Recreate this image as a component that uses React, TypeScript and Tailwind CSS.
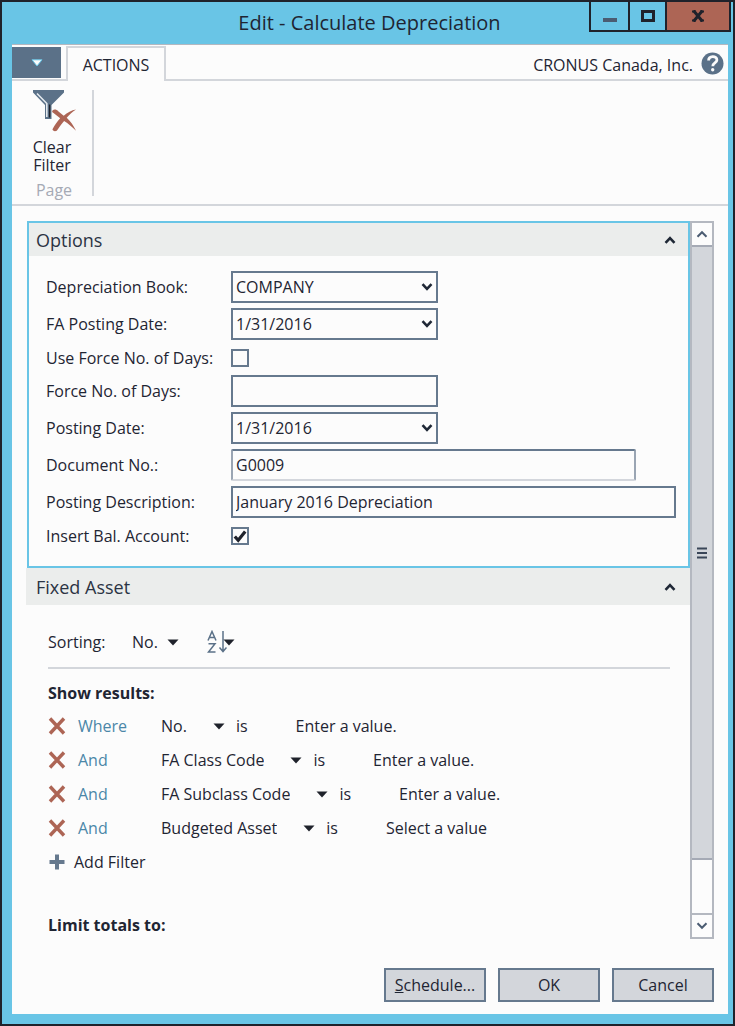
import type { ReactNode } from "react";

const INK = "text-[#1f2533]";

function Chevron({ up = false, thin = false }: { up?: boolean; thin?: boolean }) {
  return (
    <svg
      viewBox="0 0 12 8"
      className="h-2 w-3"
      fill="none"
      stroke={thin ? "#4b5c72" : "#1f2836"}
      strokeWidth={thin ? 2 : 2.6}
      aria-hidden="true"
    >
      <path d={up ? "M1.5 6.8 6 2.2l4.5 4.6" : "M1.5 1.2 6 5.8l4.5-4.6"} />
    </svg>
  );
}

function Caret() {
  return (
    <svg viewBox="0 0 12 7" className="h-[7px] w-3" fill="#1f222b" aria-hidden="true">
      <path d="M0.5 0.5h11L6 6.5z" />
    </svg>
  );
}

function ClearFilterIcon() {
  return (
    <svg viewBox="0 0 46 44" className="h-11 w-[46px]" aria-hidden="true">
      <path d="M1 0h31v2.5L19.5 15v14H13V15L1 2.500z" fill="#5b7188" />
      <path d="M5 3.500 14.800 13.500V27" fill="none" stroke="#e4e9ee" strokeWidth="1.6" />
      <path d="M17.600 14.500v13" stroke="#1f222b" strokeWidth="1.4" />
      <path
        d="M20.500 20.500c1.800-1.600 4-.9 6 .9l5.200 4.400c3.700-3.300 7.800-5.700 12.300-6.300-3.400 2.300-6.600 5-9.300 8.200 3.700 3.600 6.800 7.700 9.300 13-3.900-3.900-7.700-7.200-11.900-9.800-2.900 3.300-5.200 6.600-7.300 9.800-1.900 1.100-4.300.2-4.300-1.400 2.100-4.200 4.700-7.700 7.700-11l-6.700-5.200c-1.300-1-1.800-1.700-1-2.600z"
        fill="#ad6555"
      />
    </svg>
  );
}

function RemoveIcon() {
  return (
    <svg viewBox="0 0 18 18" className="size-[18px]" stroke="#ad6555" strokeWidth="3.4" aria-hidden="true">
      <path d="M2 1.500 16 16.500M16 1.500 2 16.500" />
    </svg>
  );
}

function SortIcon() {
  return (
    <svg
      viewBox="0 0 20 24"
      className="h-6 w-5"
      fill="none"
      stroke="#5b7188"
      strokeWidth="1.5"
      aria-hidden="true"
    >
      <path d="M1 10.500 5 1.500l4 9M2.400 7.500h5.200M1.500 13.800h6.500L1.500 22H8.500M16 1v20M12.500 17.500 16 21.500l3.500-4" />
    </svg>
  );
}

function SectionHeader({ title, className }: { title: string; className: string }) {
  return (
    <button
      type="button"
      aria-expanded="true"
      className={`flex w-full items-center justify-between bg-[#ebedec] text-left text-[18px] leading-6 text-[#2b3444] ${className}`}
    >
      <span>{title}</span>
      <Chevron up />
    </button>
  );
}

function Row({ id, label, short = false, children }: { id: string; label: string; short?: boolean; children: ReactNode }) {
  return (
    <div className={`flex items-center ${short ? "h-[25px]" : "h-8"}`}>
      <label htmlFor={id} className="w-[185px] shrink-0 whitespace-nowrap">
        {label}
      </label>
      {children}
    </div>
  );
}

const box = "h-8 border-2 border-[#66798e] bg-[#fcfcfc] px-[3px] outline-none";

function Dropdown({ id, value, others }: { id: string; value: string; others: string[] }) {
  return (
    <div className="relative w-[207px]">
      <select id={id} defaultValue={value} className={`${box} w-full appearance-none`}>
        {[value, ...others].map((o) => (
          <option key={o}>{o}</option>
        ))}
      </select>
      <span className="pointer-events-none absolute inset-y-0 right-[5px] flex items-center">
        <Chevron />
      </span>
    </div>
  );
}

function Check({ id, checked = false }: { id: string; checked?: boolean }) {
  return (
    <span className="relative flex size-[18px]">
      <input
        id={id}
        type="checkbox"
        defaultChecked={checked}
        className="peer size-[18px] appearance-none border-2 border-[#66798e] bg-[#fcfcfc]"
      />
      <svg
        viewBox="0 0 18 18"
        className="pointer-events-none absolute inset-0 hidden size-[18px] peer-checked:block"
        fill="none"
        stroke="#1f222b"
        strokeWidth="3.2"
        aria-hidden="true"
      >
        <path d="m3.800 9.500 3.400 3.800 7-8.800" />
      </svg>
    </span>
  );
}

function OptionsSection() {
  return (
    <section className="ml-px border-2 border-[#69c5e6] pb-[18px]">
      <SectionHeader title="Options" className="h-[33px] pr-3 pl-[7px]" />
      <div className="flex flex-col gap-[5px] pt-[15px] pr-3 pl-[17px]">
        <Row id="book" label="Depreciation Book:">
          <Dropdown id="book" value="COMPANY" others={["TAX"]} />
        </Row>
        <Row id="faDate" label="FA Posting Date:">
          <Dropdown id="faDate" value="1/31/2016" others={["2/29/2016"]} />
        </Row>
        <Row id="useForce" label="Use Force No. of Days:" short>
          <Check id="useForce" />
        </Row>
        <Row id="force" label="Force No. of Days:">
          <input id="force" type="text" className={`${box} w-[207px]`} />
        </Row>
        <Row id="postDate" label="Posting Date:">
          <Dropdown id="postDate" value="1/31/2016" others={["2/29/2016"]} />
        </Row>
        <Row id="docNo" label="Document No.:">
          <input
            id="docNo"
            type="text"
            defaultValue="G0009"
            className={`${box} mr-10 min-w-0 flex-1 rounded-xs border-x-[#9aa5b3] border-b-[#d3d6dc]`}
          />
        </Row>
        <Row id="desc" label="Posting Description:">
          <input id="desc" type="text" defaultValue="January 2016 Depreciation" className={`${box} min-w-0 flex-1`} />
        </Row>
        <Row id="bal" label="Insert Bal. Account:" short>
          <Check id="bal" checked />
        </Row>
      </div>
    </section>
  );
}

const filters = [
  { join: "Where", field: "No.", hint: "Enter a value." },
  { join: "And", field: "FA Class Code", hint: "Enter a value." },
  { join: "And", field: "FA Subclass Code", hint: "Enter a value." },
  { join: "And", field: "Budgeted Asset", hint: "Select a value" },
];

function InlineSelect({ value, label, gap }: { value: string; label: string; gap: string }) {
  return (
    <span className={`flex items-center ${gap}`}>
      <select aria-label={label} defaultValue={value} className="field-sizing-content appearance-none outline-none">
        {filters.map((f) => (
          <option key={f.field}>{f.field}</option>
        ))}
      </select>
      <Caret />
    </span>
  );
}

function FixedAssetSection() {
  return (
    <section>
      <SectionHeader title="Fixed Asset" className="h-[37px] pr-[14px] pl-[10px]" />
      <div className="pr-5 pl-[22px]">
        <div className="flex h-16 items-center border-b-2 border-[#d3d6db] pt-3">
          <span className="w-[84px]">Sorting:</span>
          <InlineSelect value="No." label="Sorting" gap="gap-[9px]" />
          <button type="button" aria-label="Sort order" className="ml-7 flex items-center">
            <SortIcon />
            <span className="-ml-1">
              <Caret />
            </span>
          </button>
        </div>
        <h3 className="pt-3 leading-6 font-bold">Show results:</h3>
        <ul className="pt-1">
          {filters.map((f) => (
            <li key={f.field} className="flex h-[34px] items-center whitespace-nowrap">
              <button type="button" aria-label={`Remove ${f.field}`}>
                <RemoveIcon />
              </button>
              <span className="ml-3 w-[83px] text-[#4b87a8]">{f.join}</span>
              <InlineSelect value={f.field} label={`${f.join} field`} gap="gap-[26px]" />
              <span className="ml-[11px]">is</span>
              <input
                type="text"
                aria-label={`${f.field} value`}
                placeholder={f.hint}
                className="ml-12 w-32 outline-none placeholder:text-[#1f2533] placeholder:opacity-100"
              />
            </li>
          ))}
        </ul>
        <button type="button" className="flex h-[34px] items-center gap-2">
          <svg viewBox="0 0 18 18" className="size-[18px]" stroke="#66798e" strokeWidth="4" aria-hidden="true">
            <path d="M9 1.500v15M1.500 9h15" />
          </svg>
          Add Filter
        </button>
        <h3 className="pt-[34px] leading-6 font-bold">Limit totals to:</h3>
      </div>
    </section>
  );
}

function Scrollbar() {
  return (
    <div className="flex w-6 shrink-0 flex-col border-2 border-[#b4b8c0]">
      <button type="button" aria-label="Scroll up" className="flex h-[22px] items-center justify-center">
        <Chevron up thin />
      </button>
      <div className="flex grow-[616] basis-0 items-center justify-center border-y-2 border-[#a5aab5] bg-[#d3d6db]">
        <svg viewBox="0 0 10 12" className="h-3 w-[10px]" stroke="#3a4658" strokeWidth="2" aria-hidden="true">
          <path d="M0 1.500h10M0 6h10M0 10.500h10" />
        </svg>
      </div>
      <div className="grow-[53] basis-0" />
      <button
        type="button"
        aria-label="Scroll down"
        className="flex h-6 items-center justify-center border-t-2 border-[#b4b8c0]"
      >
        <Chevron thin />
      </button>
    </div>
  );
}

function TitleBar() {
  return (
    <header className="-mr-2 -ml-1 flex h-[42px] items-start">
      <div className="flex-1" />
      <h1 className="pt-[5px] text-[20px] leading-8 whitespace-nowrap">Edit - Calculate Depreciation</h1>
      <div className="flex flex-1 justify-end">
        <div className="flex h-[30px] border-2 border-t-0 border-[#1f222b]">
          <button type="button" aria-label="Minimize" className="flex w-[39px] items-center justify-center border-r-2 border-[#1f222b]">
            <svg viewBox="0 0 14 4" className="mt-2 h-1 w-[14px]" aria-hidden="true">
              <path d="M0 0h14v4H0z" fill="#4b5c72" />
            </svg>
          </button>
          <button type="button" aria-label="Maximize" className="flex w-[37px] items-center justify-center border-r-2 border-[#1f222b]">
            <svg viewBox="0 0 14 12" className="h-3 w-[14px]" fill="none" stroke="#1f222b" strokeWidth="3" aria-hidden="true">
              <path d="M1.500 1.500h11v9h-11z" />
            </svg>
          </button>
          <button type="button" aria-label="Close" className="flex w-[62px] items-center justify-center bg-[#ad6555]">
            <svg viewBox="0 0 12 12" className="size-3" stroke="#1f222b" strokeWidth="3" aria-hidden="true">
              <path d="M1.500.5l9 11M10.500.5l-9 11" />
              <path d="M0 1.500h4M8 1.500h4M0 10.500h4M8 10.500h4" strokeWidth="2" />
            </svg>
          </button>
        </div>
      </div>
    </header>
  );
}

function Ribbon() {
  return (
    <>
      <nav className="flex h-9 items-stretch border-b-2 border-[#d3d6db] pt-px">
        <button type="button" aria-label="Application menu" className="my-px flex w-[49px] items-center justify-center bg-[#5b7188]">
          <svg viewBox="0 0 12 8" className="h-2 w-3" fill="#fcfcfc" stroke="#69c5e6" aria-hidden="true">
            <path d="M1 .8h10L6 7z" />
          </svg>
        </button>
        <button type="button" className="-mb-[2px] ml-[5px] w-[100px] border-2 border-b-0 border-[#d3d6db] bg-[#fcfcfc] text-[16px]">
          ACTIONS
        </button>
        <div className="ml-auto flex items-center gap-2 pt-px pr-1">
          <span className="pt-[3px]">CRONUS Canada, Inc.</span>
          <button type="button" aria-label="Help">
            <svg viewBox="0 0 23 23" className="size-[23px]" fill="none" aria-hidden="true">
              <circle cx="11.500" cy="11.500" r="11" fill="#5b7188" />
              <path d="M7.600 8.600c0-5.200 8.300-5.200 8.300-.6 0 3-4.100 3-4.100 6.200" stroke="#fcfcfc" strokeWidth="2.800" />
              <circle cx="11.700" cy="17.700" r="1.700" fill="#fcfcfc" />
            </svg>
          </button>
        </div>
      </nav>
      <div className="border-b-2 border-[#d3d6db] pt-[9px] pb-2">
        <div className="flex w-[82px] flex-col items-center border-r-2 border-[#d3d6db]">
          <button type="button" className="flex flex-col items-center leading-[18px]">
            <span className="pl-[6px]">
              <ClearFilterIcon />
            </span>
            <span className="pt-1">
              Clear
              <br />
              Filter
            </span>
          </button>
          <span className="pt-[10px] pl-1 leading-3 text-[#a5aab5]">Page</span>
        </div>
      </div>
    </>
  );
}

const action = "h-[34px] w-[102px] border-2 border-[#66798e] bg-[#d3d6db]";

export default function App() {
  return (
    <div
      className={`flex min-h-screen flex-col border-2 border-[#1f222b] bg-[#69c5e6] px-[10px] pb-[10px] font-['Open_Sans','Noto_Sans',sans-serif] text-[16px] leading-6 ${INK}`}
    >
      <TitleBar />
      <main className="-mr-[5px] flex flex-1 flex-col border-t border-[#b4b8c0] bg-[#fcfcfc]">
        <Ribbon />
        <div className="flex flex-1 pt-[15px] pr-[14px] pl-[14px]">
          <div className="min-w-0 flex-1">
            <OptionsSection />
            <FixedAssetSection />
          </div>
          <Scrollbar />
        </div>
        <footer className="flex justify-end gap-3 pt-[29px] pr-[14px] pb-3">
          <button type="button" className={action}>
            <span className="underline">S</span>chedule...
          </button>
          <button type="button" className={action}>
            OK
          </button>
          <button type="button" className={action}>
            Cancel
          </button>
        </footer>
      </main>
    </div>
  );
}
